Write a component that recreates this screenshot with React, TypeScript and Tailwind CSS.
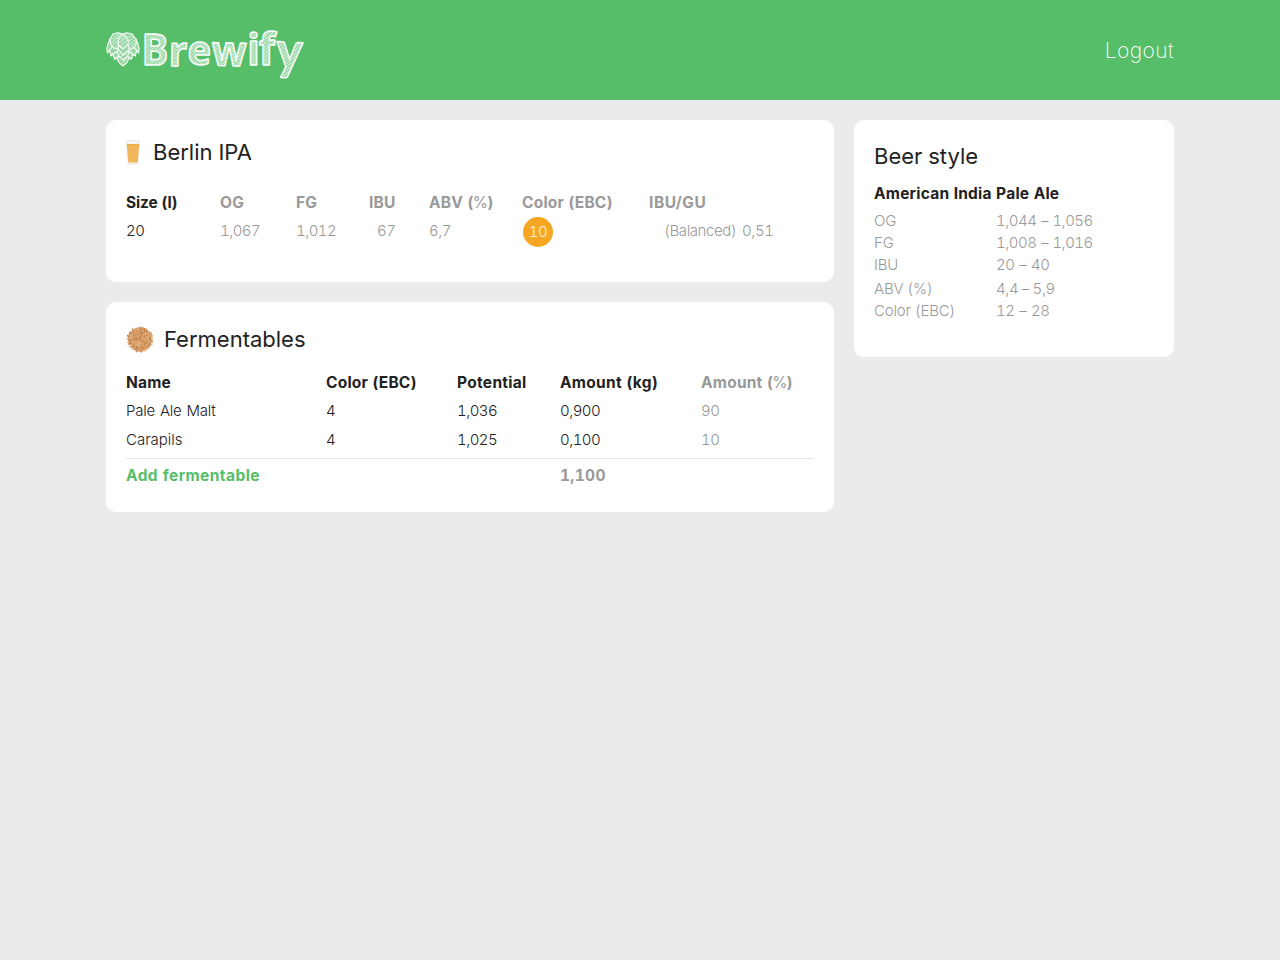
import type { ReactNode } from "react";

function HopIcon() {
  return (
    <svg width="34" height="36" viewBox="0 0 34 36" className="mt-[31px] shrink-0" fill="none" stroke="#f8fdf9" strokeLinejoin="round" strokeLinecap="round">
      <path fill="#f4fbf5" fillOpacity=".42" strokeWidth="1.1" d="M17 3 12 1.700 7 3 4 8 2 13 .8 18 1.500 22 3.500 19 5 25 7 23 8.500 28 11 27.500 13 31.500 17 35 21 31.500 23 27.500 25.500 28 27 23 29.500 25 30.500 19 32.500 22 33.200 18 32 13 30 8 26 3 21 1.700Z" />
      <path strokeWidth="1.1" d="M17 3C13 6 11.500 10 12.500 14L17 18 22 13C23 10 21 6 17 3M4.500 8C3.500 12 5 15 8 17L12 18 12.500 14M29.500 8c1.500 4 .5 7-2.500 9l-4 2-1-6M3.500 19 6 16M30.500 19 27.500 16M12 18c-2 4 1 8 5 11 4-3 7-6 6-10l-6 5zM7 23 12 20M27 23 23 20M8.500 28 13 25M25.500 28 21 25" />
      <path strokeWidth=".7" d="M7 8 13 3M5.500 12l9-8M6.500 15l6-6M9 17l3-3M15 8l4-3M13 12l8-6M14 15l8-6M23 6l4-2M23 10l5-4M23 14l7-6M24 17l5-5M12 24l3-3M13 27l6-4M17 31l4-4" />
    </svg>
  );
}

function Wordmark() {
  return (
    <svg width="172" height="100" viewBox="140 0 172 100" className="-mr-2 shrink-0" aria-label="Brewify">
      <defs>
        <pattern id="hatch" width="2.5" height="2.5" patternUnits="userSpaceOnUse" patternTransform="rotate(-40)">
          <rect width="2.5" height="2.5" fill="#fff" fillOpacity=".32" />
          <rect width="2.5" height="1.1" fill="#fff" fillOpacity=".65" />
          <rect width=".7" height="2.5" x="1" fill="#fff" fillOpacity=".15" />
        </pattern>
      </defs>
      <g fill="url(#hatch)" stroke="#fafdfb" strokeWidth="1.5" strokeLinejoin="round" className="font-['Open_Sans',sans-serif] font-bold text-[42px]">
        <text transform="translate(141.500 65) scale(.95 1.04)">B</text>
        <text transform="translate(168.500 66) rotate(1) scale(.98 1)">r</text>
        <text transform="translate(187.500 65) scale(.95 1)">e</text>
        <text transform="translate(211.500 65.500) rotate(1) scale(.97 1)">w</text>
        <text transform="translate(247.300 65) scale(.98 1.03)">i</text>
        <text transform="translate(258.800 65) scale(1 1.06)">f</text>
      </g>
      <text transform="translate(275.500 68.500) rotate(3) scale(.98 1.05)" fill="url(#hatch)" stroke="#fafdfb" strokeWidth="1.4" strokeLinejoin="round" className="font-['Lato',sans-serif] font-black text-[50px]">y</text>
    </svg>
  );
}

function BeerIcon() {
  return (
    <svg width="14" height="25" viewBox="0 0 14 25" className="shrink-0">
      <path d="M.5.5h13L11.700 24H2.300Z" fill="#f6f5f3" stroke="#e2e0de" strokeWidth=".7" />
      <path d="M.8 4h12.400l-1.500 18.500H2.300Z" fill="#f2b65a" />
      <path d="M.8 4h12.400v1H.8Z" fill="#eda944" />
    </svg>
  );
}

const noise = (n: number) => {
  const v = Math.sin(n * 127.1 + 3.7) * 43758.5453;
  return v - Math.floor(v);
};
const grains = Array.from({ length: 300 }, (_, i) => {
  const r = Math.sqrt(noise(i)) * 13.1;
  const a = noise(i + 500) * Math.PI * 2;
  return { x: 14 + r * Math.cos(a), y: 13.5 + r * Math.sin(a) * 0.95, turn: noise(i + 900) * 180, tone: i % 5 };
});
const tones = ["#d99a61", "#b67c48", "#ecbf8e", "#cd935c", "#e0a872"];

function GrainIcon() {
  return (
    <svg width="28" height="27" viewBox="0 0 28 27" className="shrink-0">
      <circle cx="14" cy="13.500" r="11.900" fill="#d39a65" />
      {grains.map((g, i) => (
        <ellipse key={i} cx={g.x} cy={g.y} rx="1.200" ry=".55" fill={tones[g.tone]} transform={`rotate(${g.turn} ${g.x} ${g.y})`} />
      ))}
    </svg>
  );
}

function Card({ className, children }: { className: string; children: ReactNode }) {
  return <section className={`rounded-[10px] bg-white px-5 ${className}`}>{children}</section>;
}

const headBase = "-mb-px pt-px text-[15.500px] font-bold leading-[29px]";
const head = `${headBase} tracking-[0.220px]`;
const num = "tracking-[-0.550px]";

function Percent() {
  return <span className="tracking-[-0.8px]">(<span className="font-normal">%</span>)</span>;
}

export default function App() {
  return (
    <div className="min-h-screen bg-[#ebebeb] font-['Inter',sans-serif] text-[15px] font-light tabular-nums text-[#222]">
      <header className="h-[100px] bg-[#56be69]">
        <div className="mx-auto flex w-[1068px] items-start">
          <HopIcon />
          <Wordmark />
          <a className="ml-auto mt-[35px] text-[21px] font-extralight leading-8 tracking-[0.4px] text-white">Logout</a>
        </div>
      </header>
      <main className="mx-auto flex w-[1068px] items-start gap-5 pt-5">
        <div className="flex w-[728px] flex-col gap-5">
          <Card className="h-[162px] pt-4">
            <h1 className="flex h-8 items-center gap-[13px] text-[22px] font-normal"><BeerIcon />Berlin IPA</h1>
            <div className="mt-[19px] grid grid-cols-[94px_76px_73px_60px_93px_127px_1fr] whitespace-nowrap leading-[29px] text-[#999]">
              <b className={`${headBase} tracking-[-0.150px] text-[#222]`}>Size (l)</b>
              <b className={head}>OG</b>
              <b className={head}>FG</b>
              <b className={head}>IBU</b>
              <b className={head}>ABV <Percent /></b>
              <b className={head}>Color (EBC)</b>
              <b className={`${headBase} tracking-[0.550px]`}>IBU/GU</b>
              <span className={`${num} text-[#222]`}>20</span>
              <span className={num}>1,067</span>
              <span className={num}>1,012</span>
              <span className={`${num} pl-2`}>67</span>
              <span className={num}>6,7</span>
              <span className="ml-px mt-px flex size-[30px] items-center justify-center rounded-full bg-[#f6a623] pb-0.5 tracking-[-0.400px] text-white/85">10</span>
              <span className="pl-[15px] tracking-[-0.400px] [word-spacing:2px]">(Balanced) 0,51</span>
            </div>
          </Card>
          <Card className="h-[210px] pt-[21px]">
            <h2 className="flex h-8 items-center gap-2.5 text-[22px] font-normal"><GrainIcon />Fermentables</h2>
            <div className="mt-3 grid grid-cols-[200px_131px_103px_141px_1fr] whitespace-nowrap border-b border-[#e6e6e6] pb-1 leading-[29px]">
              <b className={head}>Name</b>
              <b className={head}>Color (EBC)</b>
              <b className={`${headBase} tracking-[0.300px]`}>Potential</b>
              <b className={`${headBase} tracking-[0.300px]`}>Amount (kg)</b>
              <b className={`${head} text-[#999]`}>Amount <Percent /></b>
              <span className="tracking-[-0.200px] [word-spacing:1px]">Pale Ale Malt</span>
              <span>4</span>
              <span className={num}>1,036</span>
              <span className={num}>0,900</span>
              <span className={`${num} text-[#999]`}>90</span>
              <span>Carapils</span>
              <span>4</span>
              <span className={num}>1,025</span>
              <span className={num}>0,100</span>
              <span className={`${num} text-[#999]`}>10</span>
            </div>
            <div className="grid grid-cols-[434px_1fr] pt-0.5">
              <a className="text-[15.500px] font-bold leading-[29px] tracking-[0.440px] text-[#56be69]">Add fermentable</a>
              <b className="text-[15.500px] font-bold leading-[29px] tracking-[0.300px] text-[#999]">1,100</b>
            </div>
          </Card>
        </div>
        <Card className="h-[237px] w-80 pt-5">
          <h2 className="text-[22px] font-normal leading-8">Beer style</h2>
          <h3 className="mt-[7px] text-[15.500px] font-bold leading-[29px] tracking-[0.220px]">American India Pale Ale</h3>
          <dl className="mt-0.5 grid grid-cols-[122px_1fr] grid-rows-[22px_22px_23px_23px_22px] leading-[22px] tracking-[-0.150px] text-[#999]">
            <dt>OG</dt><dd className="tracking-[-0.500px] [word-spacing:1px]">1,044 – 1,056</dd>
            <dt>FG</dt><dd className="tracking-[-0.500px] [word-spacing:1px]">1,008 – 1,016</dd>
            <dt>IBU</dt><dd className="tracking-[-0.400px] [word-spacing:1px]">20 – 40</dd>
            <dt className="pt-px">ABV (%)</dt><dd className="pt-px tracking-[-0.400px]">4,4 – 5,9</dd>
            <dt>Color (EBC)</dt><dd className="tracking-[-0.400px] [word-spacing:1px]">12 – 28</dd>
          </dl>
        </Card>
      </main>
    </div>
  );
}
